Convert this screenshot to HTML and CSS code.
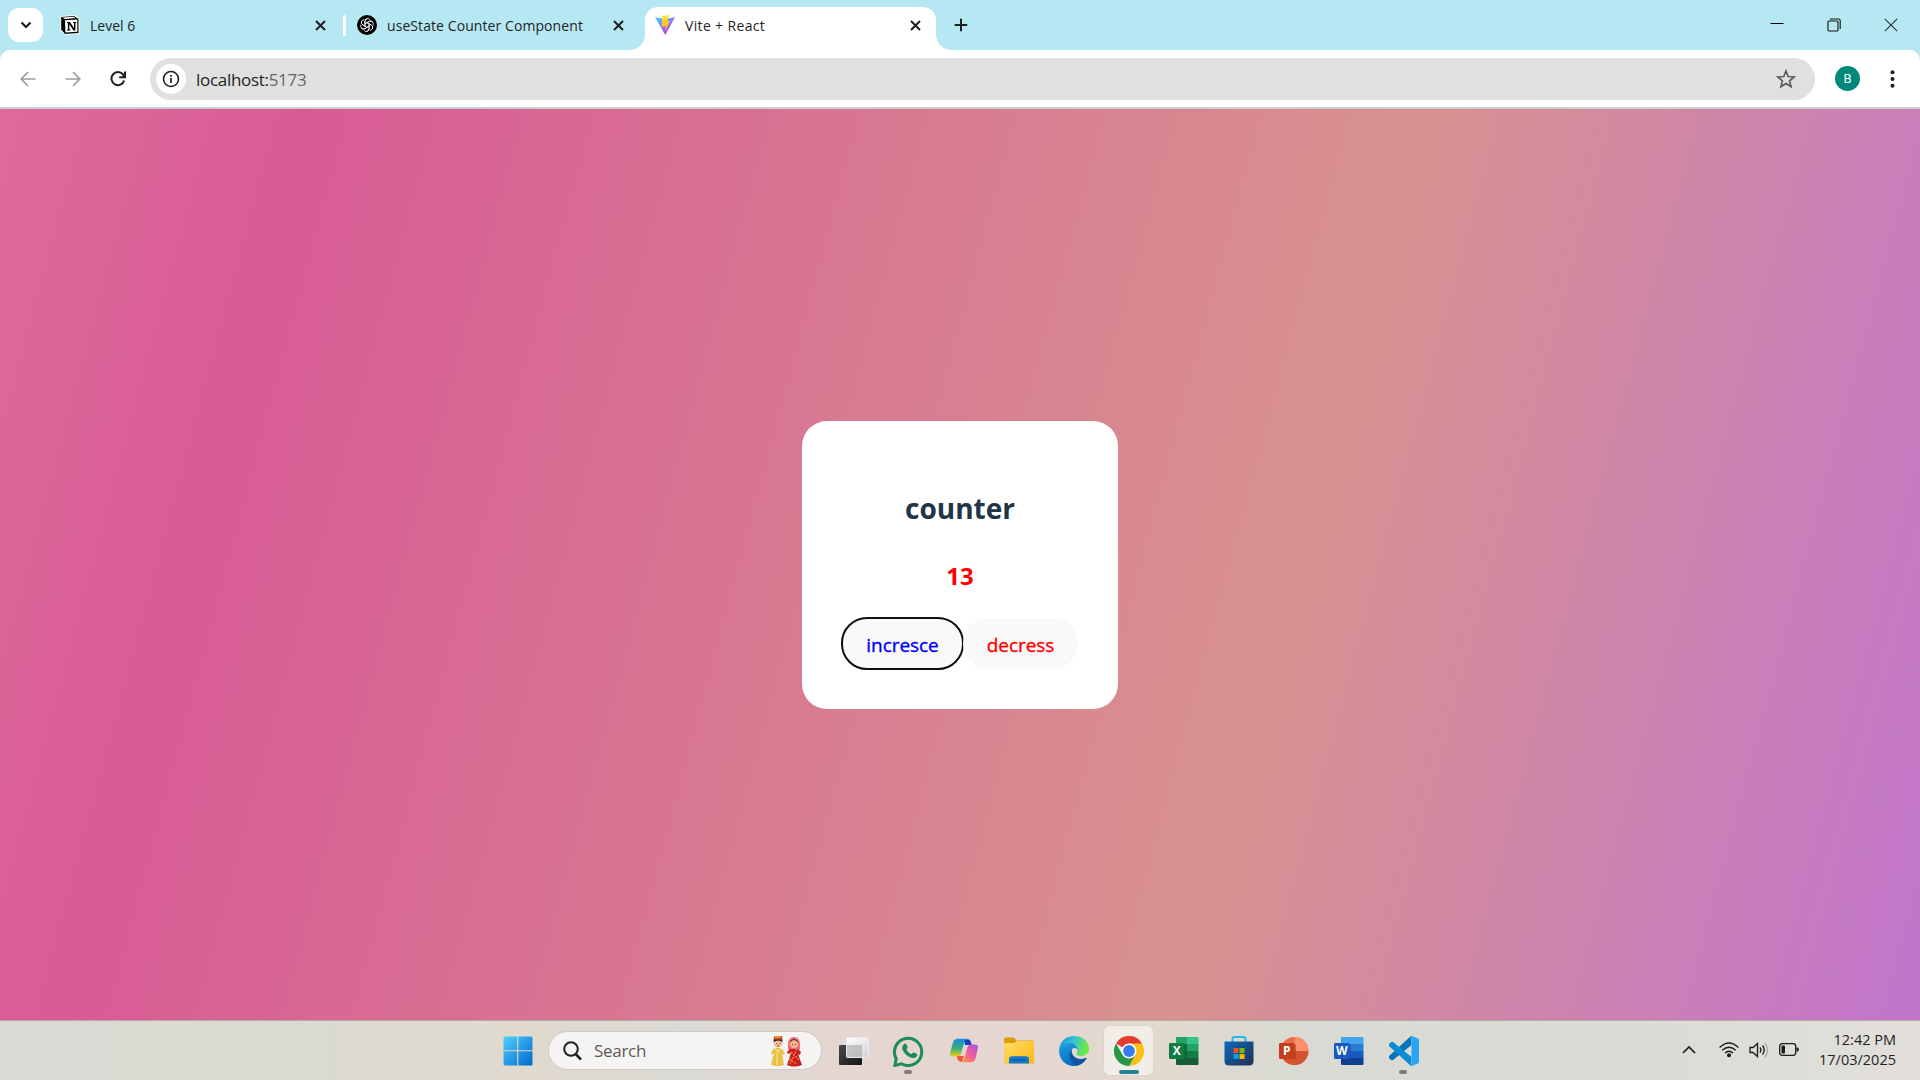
FILE: index.html
```
<!DOCTYPE html>
<html lang="en">
<head>
<meta charset="utf-8">
<title>Vite + React</title>
<link rel="stylesheet" href="styles.css">
</head>
<body>
<header class="tabstrip">
  <button class="tab-search"><svg width="12" height="8" viewBox="0 0 12 8"><path d="M1.5 1.5 6 6l4.500-4.500" fill="none" stroke="#1f1f1f" stroke-width="2.200"/></svg></button>
  <div class="tab tab-first">
    <svg class="fav" width="20" height="20" viewBox="0 0 20 20"><path d="M1 1.500 14.500.500 19 3.500V18.500L5 19.500 1 15Z" fill="#fff" stroke="#fff"/><path d="M1.200 2 14 1l4.500 3v14L5 19l-3.800-4.500Z" fill="#000"/><path d="M5 5.200 17.300 4.400v12.400L5.400 17.600Z" fill="#fff"/><path d="M2.500 2.500 13.500 1.800l2.200 1.300L5 3.900Z" fill="#fff"/><path d="M7 7h3l4 6V8h-1V7h3.200v1h-.8v7.500h-2L9.300 9.300v5.200h1.200v1H7v-1h.9V8H7Z" fill="#000"/></svg>
    <span class="tab-title">Level 6</span>
    <svg class="close" width="11" height="11" viewBox="0 0 11 11"><path d="m1 1 9 9M10 1 1 10"/></svg>
  </div>
  <i class="tab-divider"></i>
  <div class="tab tab-second">
    <svg class="fav" width="20" height="20" viewBox="0 0 20 20"><circle cx="10" cy="10" r="10"/><g fill="none" stroke="#fff" stroke-width=".8"><g id="petal"><path d="M8 11.200V6.300a2.800 2.800 0 0 1 5.200-1.400M8 8.700l4.200-2.400a2.800 2.800 0 0 1 3.700 1"/></g><use href="#petal" transform="rotate(60 10 10)"/><use href="#petal" transform="rotate(120 10 10)"/><use href="#petal" transform="rotate(180 10 10)"/><use href="#petal" transform="rotate(240 10 10)"/><use href="#petal" transform="rotate(300 10 10)"/></g></svg>
    <span class="tab-title title-long">useState Counter Component</span>
    <svg class="close" width="11" height="11" viewBox="0 0 11 11"><path d="m1 1 9 9M10 1 1 10"/></svg>
  </div>
  <div class="tab tab-active">
    <svg class="fav" width="20" height="20" viewBox="0 0 20 20"><defs><linearGradient id="va" x2=".6" y2="1"><stop stop-color="#41d1ff"/><stop offset="1" stop-color="#bd34fe"/></linearGradient><linearGradient id="vb" x2="0" y2="1"><stop stop-color="#ffea45"/><stop offset="1" stop-color="#ffa800"/></linearGradient></defs><path d="M0 2.200 10 4l10-1.800L10.300 20Z" fill="url(#va)"/><path d="m7.200.800 7.300-.8-2.200 6.500 2.800-.6-5 10.500.5-5.200-3.900.8Z" fill="url(#vb)"/></svg>
    <span class="tab-title">Vite + React</span>
    <svg class="close" width="11" height="11" viewBox="0 0 11 11"><path d="m1 1 9 9M10 1 1 10"/></svg>
  </div>
  <svg class="new-tab" width="14" height="14" viewBox="0 0 14 14"><path d="M7 .700v12.600M.700 7h12.600" stroke="#1f1f1f" stroke-width="2"/></svg>
  <div class="window-controls">
    <svg width="14" height="14" viewBox="0 0 14 14"><path d="M.500 5.500h13" stroke="#000"/></svg>
    <svg width="14" height="14" viewBox="0 0 14 14" fill="none" stroke="#111" stroke-width="1.100"><rect x="1" y="3" width="10" height="10" rx="1"/><path d="M3 1h8.500a1.700 1.700 0 0 1 1.700 1.700V11"/></svg>
    <svg width="14" height="14" viewBox="0 0 14 14"><path d="m.8.800 12.400 12.400M13.200.800.800 13.200" stroke="#263238" stroke-width="1.100"/></svg>
  </div>
</header>
<nav class="toolbar">
  <svg class="nav-icon dim" width="16" height="16" viewBox="0 0 16 16"><path d="M15.500 8H1.500M8 1 1.200 8 8 15"/></svg>
  <svg class="nav-icon dim" width="16" height="16" viewBox="0 0 16 16"><path d="M.500 8h14M8 1l6.800 7L8 15"/></svg>
  <svg class="nav-icon" width="16" height="16" viewBox="0 0 16 16"><path d="M14.200 9.500A6.500 6.500 0 1 1 13 3.500l1.500 2.200M15 .500V6.200H9.200" stroke-width="2"/></svg>
  <div class="omnibox">
    <span class="site-info"><svg width="18" height="18" viewBox="0 0 18 18"><circle cx="9" cy="9" r="7.500" fill="none" stroke="#1f1f1f" stroke-width="1.600"/><path d="M9 8v5M9 5v1.700" stroke="#1f1f1f" stroke-width="1.700"/></svg></span>
    <span class="url">localhost:<b>5173</b></span>
    <svg class="star" width="20" height="20" viewBox="0 0 20 20"><path d="m10 2 2.200 5.500 5.900.500-4.500 3.800 1.400 5.800L10 14.500l-5 3.100 1.400-5.800L1.900 8l5.900-.5Z" fill="none" stroke="#5c5c5c" stroke-width="1.700"/></svg>
  </div>
  <span class="avatar">B</span>
  <svg class="menu" width="5" height="18" viewBox="0 0 5 18" fill="#1f1f1f"><circle cx="2.500" cy="2.200" r="2"/><circle cx="2.500" cy="9" r="2"/><circle cx="2.500" cy="15.800" r="2"/></svg>
</nav>
<main class="page">
  <section class="card">
    <h2 class="heading">counter</h2>
    <h3 class="count">13</h3>
    <div class="actions"><button class="btn increase">incresce</button><button class="btn decrease">decress</button></div>
  </section>
</main>
<footer class="taskbar">
  <div class="apps">
    <svg class="start" width="30" height="30" viewBox="0 0 30 30"><defs><linearGradient id="win" x2="1" y2="1"><stop stop-color="#4fd0ff"/><stop offset="1" stop-color="#0067cc"/></linearGradient></defs><path fill="url(#win)" d="M2 .500h12.200v13.700H.500V2A1.500 1.500 0 0 1 2 .500Zm13.300 0H28A1.500 1.500 0 0 1 29.500 2v12.200H15.300ZM.500 15.300h13.700v14.200H2A1.500 1.500 0 0 1 .500 28Zm14.800 0h14.200V28a1.500 1.500 0 0 1-1.500 1.500H15.300Z"/></svg>
    <div class="search">
      <svg width="19" height="20" viewBox="0 0 19 20"><circle cx="8" cy="8" r="6.800" fill="none" stroke="#222" stroke-width="2"/><path d="m12.700 13 5.300 5.700" stroke="#222" stroke-width="2.600"/></svg>
      <span class="search-label">Search</span>
      <svg class="couple" width="32" height="32" viewBox="0 0 32 32"><path d="M6 13h4l3 2 2 4-2 1-1-2 2 12q-6 2-13 0l3-12-2 2-1-2 2-4Z" fill="#e8c04a"/><path d="m5 13 3 4 3-4M7 18v12" stroke="#fae38b" stroke-width="1.200" fill="none"/><circle cx="8" cy="8" r="4.500" fill="#f1c09d"/><path d="M3.500 7 4 2l8-1 .5 6q-4-3-9 0Z" fill="#34201c"/><path d="M4 4.500 4 1.500l8-.5v3.500Z" fill="#d54f26"/><path d="M5 2h6" stroke="#f4c535"/><path d="M6.500 8v1M9.500 8v1M7 11h2" stroke="#603828" stroke-width=".8"/><path d="M18 14q-1-12 6-12t6 12l-2 2h-8Z" fill="#ef6a78"/><circle cx="24" cy="9" r="4.300" fill="#f1b38c"/><path d="M20 7q4-5 8 0" stroke="#4a211c" fill="none"/><path d="m20 14 8 0 3 3-1 3-2-1 4 11q-8 3-15 0l4-12-3 1-1-2Z" fill="#c91f23"/><path d="m27 14-7 15M21 17l8 8M19 24l8 5" stroke="#f09133" stroke-width="1.200" stroke-dasharray="2 1"/><path d="M22.500 9v1M25.500 9v1" stroke="#502020" stroke-width=".8"/></svg>
    </div>
    <span class="app"><svg width="30" height="28" viewBox="0 0 30 28"><defs><linearGradient id="tv" x2="1" y2="1"><stop stop-color="#4a4a4a"/><stop offset="1" stop-color="#151515"/></linearGradient><linearGradient id="tw" x2="1" y2="1"><stop stop-color="#fff"/><stop offset="1" stop-color="#d3d3d5"/></linearGradient></defs><rect y="8" width="23" height="20" rx="1" fill="url(#tv)"/><rect x="7.500" y=".500" width="22" height="20" rx="1" fill="url(#tw)" stroke="#ececec"/><path d="M8 8h15v12H8Z" fill="#999" opacity=".5"/></svg></span>
    <span class="app"><svg width="32" height="32" viewBox="0 0 32 32"><path d="M3.200 23.500A13.600 13.600 0 1 1 8.500 28.800L2 30.400Z" fill="none" stroke="#1c8c55" stroke-width="3"/><path d="M11.200 9c.8-.7 1.800-.6 2.200.3l1.200 2.800c.3.700-1.300 2-1 2.600 1.200 2.100 2.700 3.500 4.800 4.400.8.200 1.700-2 2.500-1.700l2.800 1.400c.8.400.6 1.600.1 2.500-1 1.700-3.400 2.200-5.500 1.400-4-1.300-7-3.900-8.700-7.600-.9-2.100-.2-4.700 1.600-6.100Z" fill="#1c8c55"/></svg><i class="dot"></i></span>
    <span class="app"><svg width="28" height="25" viewBox="0 0 30 26"><defs><linearGradient id="ca" x2="0" y2="1"><stop stop-color="#168be4"/><stop offset=".55" stop-color="#3cae78"/><stop offset="1" stop-color="#f3cc16"/></linearGradient><linearGradient id="cb" x1="1" x2="0" y2="1"><stop stop-color="#a451f2"/><stop offset=".5" stop-color="#ed5d99"/><stop offset="1" stop-color="#ff9b44"/></linearGradient></defs><path d="M15 1h4q2.600 0 3.300 2.500L23.500 7H16Z" fill="#173fc5"/><path d="M7 19h8l-2 6h-1q-3 0-4-3Z" fill="#f25739"/><path d="M8 .500h10q-2 1-2.800 4L12 16q-1 3.500-4.500 3.500h-4q-4-.2-3.300-4L3 5q1-4 5-4.500Z" fill="url(#ca)"/><path d="M22.500 25.500h-10q2-1 2.800-4L18.500 10q1-3.500 4.500-3.500h3.500q4 .2 3.300 4L27.500 21q-1 4-5 4.500Z" fill="url(#cb)"/></svg></span>
    <span class="app"><svg width="30" height="27" viewBox="0 0 30 27"><defs><linearGradient id="fo" x2="1" y2="1"><stop stop-color="#ffdc69"/><stop offset="1" stop-color="#fbb80e"/></linearGradient></defs><path d="M0 2q0-1.500 1.500-1.500H10l2.500 3H30V10H0Z" fill="#dc9c0a"/><path d="M0 6h10l3-2h17v22.500H0Z" fill="url(#fo)"/><path d="M5 26.500V22q0-2.800 3-2.800h14q3 0 3 2.800v4.500Z" fill="#1478cb"/><path d="M8 23h14" stroke="#074d92"/></svg></span>
    <span class="app"><svg width="30" height="30" viewBox="0 0 30 30"><defs><linearGradient id="ea" x2="1" y2=".3"><stop stop-color="#168fd8"/><stop offset=".5" stop-color="#35c1d7"/><stop offset="1" stop-color="#6bea45"/></linearGradient><linearGradient id="eb" x2=".5" y2="1"><stop stop-color="#1da4e3"/><stop offset="1" stop-color="#0865bd"/></linearGradient></defs><path d="M0 14C1 5 7 0 15 0c9 0 15 6 15 12.500 0 5-4 7.500-8 7.500-3.500 0-5-1.200-4.500-2.500 1-1.500 1.200-2 1.200-3C18 8 5 4 0 14Z" fill="url(#ea)"/><path d="M0 14C2 9 6 7 10.500 7c5 0 8 3.500 8.200 7-2.500-4-7-1.500-7 3 0 6 8 9 16 5C25 27 20.500 30 15 30 6 30 0 23 0 14Z" fill="url(#eb)"/><path d="M13 13c-4 4-3 12 4 16.800 5-.6 8.500-3.800 10.500-7.200q.3-1.200-1-.6C19 25 11 20 13 13Z" fill="#11549f"/></svg></span>
    <span class="app app-active"><svg width="30" height="30" viewBox="0 0 30 30"><path d="M15 15 2 7.500a15 15 0 0 1 26 0Z" fill="#e33b2e"/><path d="M15 7.500h13A15 15 0 0 1 15 30l6.500-11.200Z" fill="#fbc116"/><path d="M21.500 18.800 15 30A15 15 0 0 1 2 7.500l6.500 11.300Z" fill="#279847"/><circle cx="15" cy="15" r="7.500" fill="#fff"/><circle cx="15" cy="15" r="5.900" fill="#347ceb"/></svg><i class="dot dot-active"></i></span>
    <span class="app"><svg width="30" height="28" viewBox="0 0 30 28"><path d="M7 1q0-1 1-1h10v14H7Z" fill="#21a366"/><path d="M18 0h10.500q1 0 1 1v6H18Z" fill="#33c481"/><path d="M18 7h11.500v7H18Z" fill="#21a366"/><path d="M7 14h11v14H8q-1 0-1-1Z" fill="#185c37"/><path d="M18 14h11.500v7H18Z" fill="#107c41"/><path d="M18 21h11.500v6q0 1-1 1H18Z" fill="#185c37"/><path d="M7 7h11v14H7Z" fill="#0b6937"/><rect y="6" width="15.500" height="16" rx="1.200" fill="#107c41"/><text class="glyph" x="7.700" y="18.300">X</text></svg></span>
    <span class="app"><svg width="30" height="30" viewBox="0 0 30 30"><defs><linearGradient id="st" x2="1" y2="1"><stop stop-color="#0b69bc"/><stop offset="1" stop-color="#243052"/></linearGradient></defs><path d="M8.500 6V3q0-2 2-2h9q2 0 2 2v3" fill="none" stroke="#22b9ee" stroke-width="2"/><path d="M.500 5.500h29V25q0 4.500-4.500 4.500H5Q.500 29.500.500 25Z" fill="url(#st)"/><path d="M9.500 12h5v5h-5Z" fill="#f25022"/><path d="M15.500 12h5v5h-5Z" fill="#7fba00"/><path d="M9.500 18h5v5h-5Z" fill="#00a4ef"/><path d="M15.500 18h5v5h-5Z" fill="#ffb900"/></svg></span>
    <span class="app"><svg width="30" height="28" viewBox="0 0 30 28"><circle cx="15.500" cy="14" r="14" fill="#ed6c47"/><path d="M15.500 0a14 14 0 0 1 14 14h-14Z" fill="#ff8f6b"/><path d="M29.500 14a14 14 0 0 1-28 0Z" fill="#d35230"/><path d="M4 7h13v15H6Z" fill="#a93c20" opacity=".6"/><rect y="6" width="15.500" height="16" rx="1.200" fill="#c43e1c"/><text class="glyph" x="7.700" y="18.300">P</text></svg></span>
    <span class="app"><svg width="30" height="28" viewBox="0 0 30 28"><path d="M7 7V1q0-1 1-1h20.500q1 0 1 1v6Z" fill="#41a5ee"/><path d="M7 7h22.500v7H7Z" fill="#2b7cd3"/><path d="M7 14h22.500v7H7Z" fill="#185abd"/><path d="M7 21h22.500v6q0 1-1 1H8q-1 0-1-1Z" fill="#103f91"/><path d="M7 7h10v15H7Z" fill="#174b9c" opacity=".5"/><rect y="6" width="15.500" height="16" rx="1.200" fill="#185abd"/><text class="glyph" x="7.700" y="18.300">W</text></svg></span>
    <span class="app"><svg width="30" height="30" viewBox="0 0 30 30"><path d="M22 0 0 20v2l2 2q1 .5 2 0L22.500 9Z" fill="#0875b8"/><path d="M22 30 0 10V8l2-2q1-.5 2 0L22.500 21Z" fill="#0b8cd4"/><path d="M21.500.200 23 0l6 2.500q1 .5 1 1.500v22q0 1-1 1.500L23 30l-1.500-.2 1-1.800V2Z" fill="#2aa5f3"/></svg><i class="dot"></i></span>
  </div>
  <div class="tray">
    <svg class="chev" width="14" height="9" viewBox="0 0 14 9"><path d="m1 8 6-6 6 6" fill="none" stroke="#1b1b1b" stroke-width="1.700"/></svg>
    <svg class="wifi" width="20" height="16" viewBox="0 0 20 16" fill="none" stroke="#1b1b1b" stroke-width="1.300"><path d="M.600 5.500q9.400-9 18.800 0M3.300 8.300q6.700-6.200 13.400 0M6 11q4-3.600 8 0"/><circle cx="10" cy="13.200" r="1.400" fill="#1b1b1b"/></svg>
    <svg class="volume" width="20" height="16" viewBox="0 0 20 16" fill="none" stroke="#1b1b1b" stroke-width="1.300"><path d="M1 5.500h3L8.500 1.500v13L4 10.500H1ZM11 5.500q2 2.500 0 5M13.500 3.500q3.500 4.500 0 9"/><path d="M16 1q5 7 0 14" stroke="#aaa"/></svg>
    <svg class="battery" width="20" height="13" viewBox="0 0 20 13"><rect x=".700" y=".700" width="16" height="11.600" rx="2.500" fill="none" stroke="#1b1b1b" stroke-width="1.300"/><rect x="2.500" y="2.500" width="3.500" height="8" rx=".8" fill="#1b1b1b"/><path d="M17.500 4.500h1q1.300 0 1.300 2t-1.300 2h-1Z" fill="#1b1b1b"/></svg>
    <div class="clock"><span class="time">12:42 PM</span><span class="date">17/03/2025</span></div>
  </div>
</footer>
</body>
</html>
```
FILE: styles.css
```
* { box-sizing: border-box; }
body {
  margin: 0;
  width: 1920px;
  height: 1080px;
  overflow: hidden;
  display: flex;
  flex-direction: column;
  background: #b5e8f2;
  font-family: "Open Sans", "Noto Sans", sans-serif;
  color: #1f1f1f;
}
svg { display: block; flex: none; }
button { border: 0; padding: 0; font-family: inherit; }

.tabstrip { height: 50px; flex: none; display: flex; align-items: center; padding-left: 8px; }
.tab-search { width: 35px; height: 34px; border-radius: 11px; background: #fff; display: grid; place-items: center; }
.tab { display: flex; align-items: center; }
.tab-title { font-size: 14px; line-height: 20px; white-space: nowrap; margin-left: 10px; margin-top: 1px; }
.title-long { letter-spacing: 0.08px; }
.close { margin-left: auto; stroke: #1f1f1f; stroke-width: 2; }
.tab-first { width: 266px; margin-left: 17px; }
.tab-divider { width: 3px; height: 21px; border-radius: 2px; background: #fff; margin-left: 17px; }
.tab-second { width: 267px; margin-left: 11px; }
.tab-active {
  position: relative;
  align-self: flex-end;
  width: 291px;
  height: 43px;
  margin-left: 21px;
  padding: 0 15px 7px 10px;
  background: #fff;
  border-radius: 13px 13px 0 0;
}
.tab-active .tab-title { letter-spacing: 0.35px; }
.tab-active::before, .tab-active::after {
  content: "";
  position: absolute;
  bottom: 0;
  width: 15px;
  height: 15px;
}
.tab-active::before { left: -15px; background: radial-gradient(circle at 0 0, transparent 14.500px, #fff 15px); }
.tab-active::after { right: -15px; background: radial-gradient(circle at 100% 0, transparent 14.500px, #fff 15px); }
.new-tab { margin-left: 18px; }
.window-controls { margin-left: auto; display: flex; gap: 43px; padding-right: 22px; }

.toolbar {
  height: 59px;
  flex: none;
  display: flex;
  align-items: center;
  padding: 0 25px 0 20px;
  background: #fff;
  border-bottom: 2px solid #cccfcd;
  border-radius: 10px 10px 0 0;
}
.nav-icon { fill: none; stroke: #1f1f1f; stroke-width: 1.7; margin-right: 29px; }
.dim { stroke: #9d9d9d; }
.omnibox { flex: 1; height: 42px; display: flex; align-items: center; background: #e0e0e0; border-radius: 21px; padding: 0 19px 0 6px; margin-left: -5px; }
.site-info { width: 30px; height: 30px; display: grid; place-items: center; border-radius: 50%; background: #fff; }
.url { font-size: 17px; letter-spacing: -0.3px; margin: 1px 0 0 10px; }
.url b { font-weight: 400; color: #666; }
.star { margin-left: auto; }
.avatar { width: 25px; height: 25px; border-radius: 50%; background: #00897b; color: #fff; font: 13px/25px Roboto, sans-serif; text-align: center; margin: 0 30px 0 20px; }

.page {
  flex: 1;
  display: grid;
  place-items: center;
  background: linear-gradient(105deg, #de6b9a 0%, #d85b95 14%, #d8928f 65.500%, #c175cc 100%);
}
.card { width: 316px; height: 288px; padding: 65px 40px 0; margin-top: 1px; border-radius: 25px; background: #fff; text-align: center; }
.heading { margin: 0; font-size: 28px; line-height: 45px; color: #213547; }
.count { margin: 24px 0 0; font-size: 24px; line-height: 42px; color: #f00; }
.actions { display: flex; margin-top: 21px; }
.btn { height: 51px; border-radius: 25px; background: #f9f9f9; font-size: 19px; padding-top: 3px; letter-spacing: -0.05px; -webkit-text-stroke: 0.35px; }
.increase { width: 121px; color: #00f; outline: 2px solid #101010; outline-offset: -1px; }
.decrease { width: 115px; color: #f00; }

.taskbar {
  height: 60px;
  flex: none;
  display: flex;
  align-items: center;
  justify-content: space-between;
  border-top: 1px solid #b5aca8;
  background: linear-gradient(90deg, #dadad4 0, #dadad2 300px, #e0d9ce 530px, #dadad4 680px, #e4d6d1 830px, #e5d6d1 1000px, #e2d9ce 1150px, #d9dad3 1300px, #dadbd5 1600px, #e2dfdb 1920px);
}
.apps { display: flex; align-items: center; height: 100%; padding-left: 503px; }
.search { width: 274px; height: 39px; margin: 0 7px 0 15px; padding: 0 19px 0 14px; display: flex; align-items: center; border: 1px solid #cdc9c5; border-radius: 20px; background: #f6f4f2; }
.search-label { font-size: 17px; letter-spacing: -0.3px; color: #5b5a59; margin-left: 12px; }
.couple { margin-left: auto; }
.app { position: relative; width: 49px; height: 49px; margin-right: 6px; display: grid; place-items: center; border-radius: 5px; }
.app-active { background: #f2ede7; box-shadow: 0 0 1px #b7afa8; }
.dot { position: absolute; bottom: 1px; left: 20px; width: 8px; height: 4px; border-radius: 2px; background: #827b78; }
.dot-active { left: 15px; width: 20px; background: #248296; }
.glyph { font: bold 12px "Open Sans", sans-serif; fill: #fff; text-anchor: middle; }
.tray { display: flex; align-items: center; padding: 0 24px 2px 0; }
.chev { margin-right: 23px; }
.wifi { margin-right: 10px; }
.volume { margin-right: 10px; }
.battery { margin-right: 20px; }
.clock { display: flex; flex-direction: column; align-items: flex-end; font-size: 14.5px; line-height: 20px; }
```
